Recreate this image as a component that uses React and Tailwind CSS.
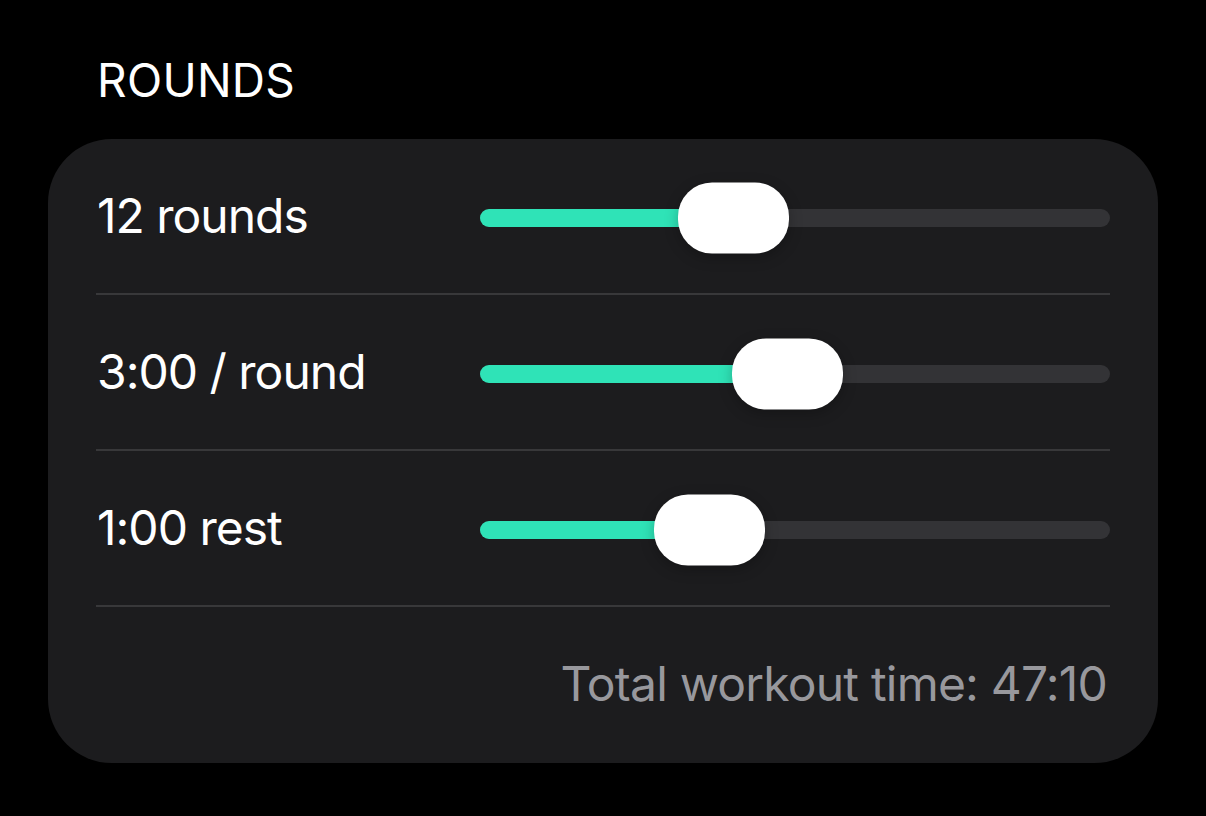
import { useState } from 'react';

const TRACK_W = 630;
const THUMB_W = 111;

const rows = [
  { key: 'rounds', label: '12 rounds', pos: 198 },
  { key: 'round', label: '3:00 / round', pos: 252 },
  { key: 'rest', label: '1:00 rest', pos: 174 },
];

function Slider({ pos }) {
  // pos = thumb left offset within the track, in px
  const center = pos + THUMB_W / 2;
  return (
    <div className="relative mt-[3px] w-[630px] h-[72px] flex items-center">
      <div className="w-full h-[18px] rounded-full bg-[#333336]" />
      <div
        className="absolute left-0 top-1/2 -translate-y-1/2 h-[18px] rounded-full bg-[#2fe3b7]"
        style={{ width: `${(center / TRACK_W) * 100}%` }}
      />
      <div
        className="absolute top-1/2 -translate-y-1/2 w-[111px] h-[71px] rounded-[34px] bg-white shadow-[0_4px_14px_rgba(0,0,0,0.25)]"
        style={{ left: `${pos}px` }}
      />
    </div>
  );
}

export default function App() {
  const [items] = useState(rows);
  return (
    <div className="min-h-screen w-full bg-black font-['Inter',sans-serif] text-white">
      <div className="pt-[52px] px-[48px]">
        <h2 className="pl-[49px] text-[46px] leading-[56px] tracking-[0.3px]">ROUNDS</h2>
        <div className="mt-[31px] rounded-[64px] bg-[#1c1c1e] px-[48px] h-[624px] flex flex-col">
          {items.map((r) => (
            <div key={r.key} className="flex flex-col">
              <div className="h-[154px] flex items-center justify-between">
                <span className="pl-px text-[48px] tracking-[-1px]">{r.label}</span>
                <Slider pos={r.pos} />
              </div>
              <div className="h-[2px] bg-[#38383a]" />
            </div>
          ))}
          <div className="flex-1 flex items-center justify-end pb-[2px]">
            <span className="pr-[3px] text-[48px] tracking-[-0.8px] text-[#98989d]">Total workout time: 47:10</span>
          </div>
        </div>
      </div>
    </div>
  );
}
